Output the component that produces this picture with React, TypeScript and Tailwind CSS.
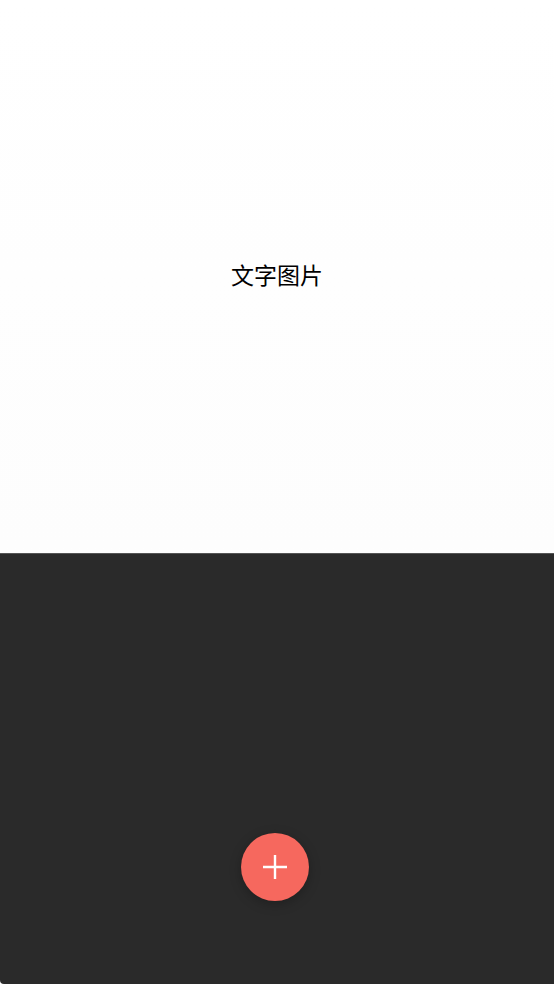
import React from 'react';

const App: React.FC = () => {
  return (
    <div className="flex h-[984px] w-[554px] flex-col overflow-hidden bg-white font-['Noto_Sans_CJK_SC','Noto_Sans',sans-serif]">
      <div className="flex h-[553px] items-center justify-center bg-gradient-to-b from-white to-[#fdfdfd] pb-[4px]">
        <span className="text-[23px] leading-none text-black">文字图片</span>
      </div>
      <div className="flex flex-1 flex-col items-center justify-end rounded-bl-[4px] border-t border-[#555555] bg-[#2a2a2a] pr-[4px] pb-[83px]">
        <button className="flex h-[68px] w-[68px] items-center justify-center rounded-full bg-[#f6685e] shadow-[0_3px_12px_rgba(0,0,0,0.25)]">
          <svg width="26" height="26" viewBox="0 0 26 26" fill="none" stroke="#ffffff" strokeWidth="2.4">
            <path d="M13 1v24M1 13h24" />
          </svg>
        </button>
      </div>
    </div>
  );
};

export default App;
